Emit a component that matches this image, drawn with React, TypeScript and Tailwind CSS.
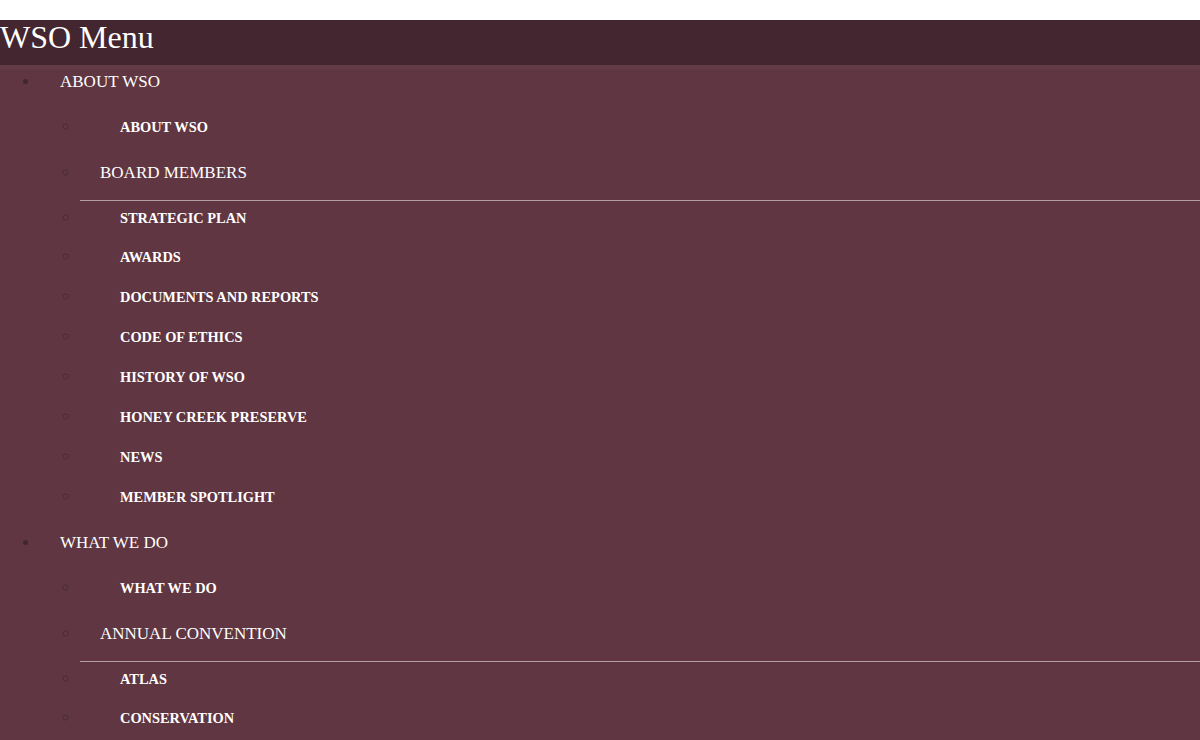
import React from 'react';

type Item = { label: string; kind?: 'sub' | 'afterSub' };

const groups: { title: string; items: Item[] }[] = [
  {
    title: 'ABOUT WSO',
    items: [
      { label: 'ABOUT WSO' },
      { label: 'BOARD MEMBERS', kind: 'sub' },
      { label: 'STRATEGIC PLAN', kind: 'afterSub' },
      { label: 'AWARDS' },
      { label: 'DOCUMENTS AND REPORTS' },
      { label: 'CODE OF ETHICS' },
      { label: 'HISTORY OF WSO' },
      { label: 'HONEY CREEK PRESERVE' },
      { label: 'NEWS' },
      { label: 'MEMBER SPOTLIGHT' },
    ],
  },
  {
    title: 'WHAT WE DO',
    items: [
      { label: 'WHAT WE DO' },
      { label: 'ANNUAL CONVENTION', kind: 'sub' },
      { label: 'ATLAS', kind: 'afterSub' },
      { label: 'CONSERVATION' },
    ],
  },
];

function SubItem({ item }: { item: Item }) {
  if (item.kind === 'sub') {
    return (
      <li className="border-b border-[#b69ea6] marker:text-[#4a2c36]">
        <a href="#" className="block pl-5 pb-[2px] text-[17px] leading-[51px] text-white">
          {item.label}
        </a>
      </li>
    );
  }
  return (
    <li className="marker:text-[#4a2c36]">
      <a
        href="#"
        className={
          item.kind === 'afterSub'
            ? 'block pl-10 pb-[2px] text-[14.4px] font-bold leading-[34px] text-white'
            : 'block pl-10 text-[14.4px] font-bold leading-[40px] text-white'
        }
      >
        {item.label}
      </a>
    </li>
  );
}

export default function App() {
  return (
    <div className="min-h-screen bg-white pt-5 font-['Liberation_Serif',serif]">
      <div className="min-h-[720px] bg-[#5f3641]">
        <h1 className="h-[45px] bg-[#43262f] text-[32px] leading-[34px] text-white">WSO Menu</h1>
        <ul className="list-disc pl-10 shadow-[inset_0_4px_0_#633c47]">
          {groups.map((g) => (
            <li key={g.title} className="pb-[9px] text-[17px] marker:text-[#3f2731]">
              <a href="#" className="block pl-5 leading-[34px] text-white">
                {g.title}
              </a>
              <ul className="mt-2 list-[circle] pl-10">
                {g.items.map((it) => (
                  <SubItem key={it.label + (it.kind ?? '')} item={it} />
                ))}
              </ul>
            </li>
          ))}
        </ul>
      </div>
    </div>
  );
}
